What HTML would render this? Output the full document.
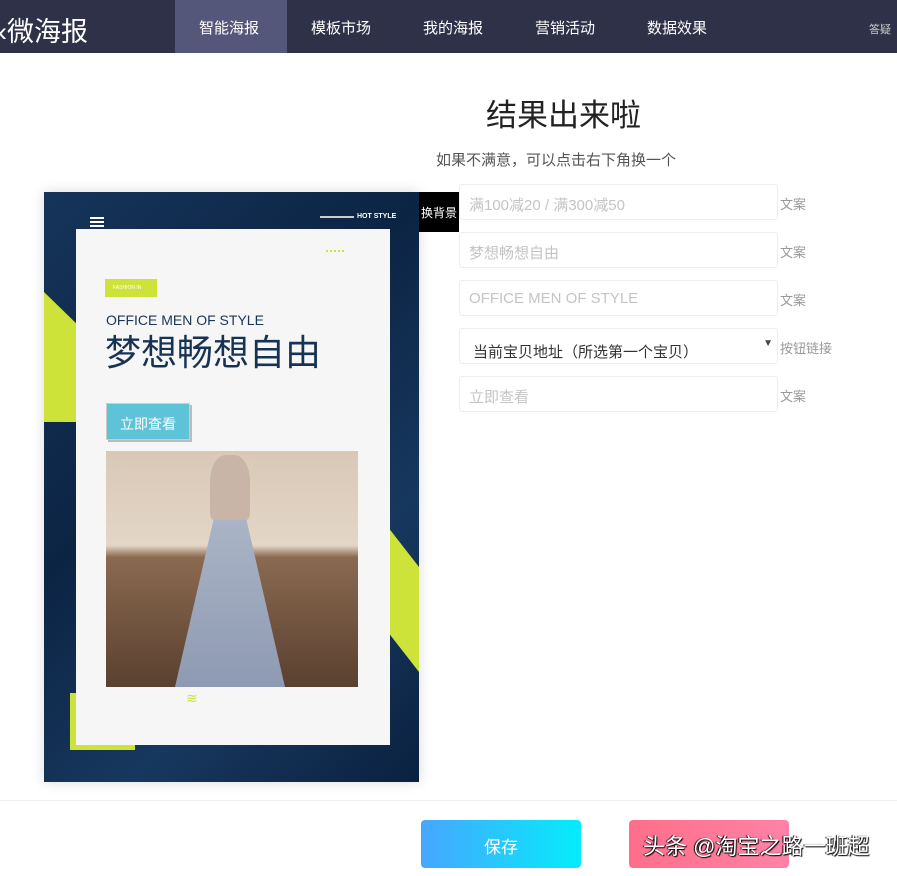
<!DOCTYPE html><html><head><meta charset="utf-8"><style>
*{margin:0;padding:0;box-sizing:border-box}
body{width:897px;height:876px;background:#fff;font-family:"Liberation Sans","Noto Sans CJK SC",sans-serif;position:relative;overflow:hidden}
.nav{position:absolute;left:0;top:0;width:897px;height:53px;background:#2f3148}
.nav span{position:absolute;top:17px;color:#fff;font-size:15px}
.a{position:absolute}
.inp{position:absolute;left:459px;width:319px;height:36px;border:1px solid #eee;border-radius:3px;color:#c4c4c4;font-size:15px;padding:9px 0 0 9px}
.lb{position:absolute;left:780px;color:#999;font-size:13px}
</style></head><body>
<div class="nav">
<span style="left:-2px;top:10px;font-size:27px">‹微海报</span>
<div class="a" style="left:175px;top:0;width:112px;height:53px;background:#55577a"></div>
<span style="left:199px">智能海报</span><span style="left:311px">模板市场</span><span style="left:423px">我的海报</span><span style="left:535px">营销活动</span><span style="left:647px">数据效果</span>
<span style="left:869px;top:21px;font-size:11px;color:#ccc">答疑</span>
</div>
<div class="a" style="left:486px;top:90px;font-size:31px;color:#222">结果出来啦</div>
<div class="a" style="left:436px;top:149px;font-size:15px;color:#555">如果不满意，可以点击右下角换一个</div>
<div class="inp" style="top:184px">满100减20 / 满300减50</div><div class="lb" style="top:194px">文案</div>
<div class="inp" style="top:232px">梦想畅想自由</div><div class="lb" style="top:242px">文案</div>
<div class="inp" style="top:280px">OFFICE MEN OF STYLE</div><div class="lb" style="top:290px">文案</div>
<div class="inp" style="top:328px;color:#333;padding-left:13px;padding-top:12px">当前宝贝地址（所选第一个宝贝）<span style="position:absolute;right:4px;top:9px;font-size:10px;color:#444">▼</span></div><div class="lb" style="top:338px">按钮链接</div>
<div class="inp" style="top:376px">立即查看</div><div class="lb" style="top:386px">文案</div>
<!-- poster -->
<div class="a" style="left:44px;top:192px;width:375px;height:590px;background:linear-gradient(135deg,#16345a,#0c2444 40%,#17385e 70%,#0b2140);box-shadow:0 0 12px rgba(0,0,0,.15);overflow:hidden">
<div class="a" style="left:0;top:100px;width:40px;height:130px;background:#cde33a;clip-path:polygon(0 0,100% 30%,100% 100%,0 100%)"></div>
<div class="a" style="left:340px;top:330px;width:35px;height:150px;background:#cde33a;clip-path:polygon(0 0,100% 30%,100% 100%,0 70%)"></div>
<div class="a" style="left:26px;top:501px;width:65px;height:57px;background:#cde33a"></div>
<div class="a" style="left:46px;top:25px;width:14px;height:2px;background:#fff;box-shadow:0 4px #fff,0 8px #fff"></div>
<div class="a" style="left:276px;top:24px;width:34px;height:2px;background:#ccc"></div>
<div class="a" style="left:313px;top:21px;font-size:7px;color:#fff;font-weight:bold">HOT STYLE</div>
</div>
<div class="a" style="left:419px;top:192px;width:40px;height:40px;background:#000;color:#fff;font-size:12px;padding-top:12px;text-align:center">换背景</div>
<div class="a" style="left:76px;top:229px;width:314px;height:516px;background:#f6f6f6"></div>
<div class="a" style="left:326px;top:250px;width:18px;height:4px;border-top:2px dotted #cde33a"></div>
<div class="a" style="left:105px;top:279px;width:52px;height:18px;background:#cde33a;color:#fff;font-size:5px;padding:6px 0 0 8px">FASHION IN</div>
<div class="a" style="left:106px;top:312px;font-size:14px;color:#1b3556">OFFICE MEN OF STYLE</div>
<div class="a" style="left:105px;top:331px;font-size:36px;color:#173354;line-height:44px">梦想畅想自由</div>
<div class="a" style="left:106px;top:403px;width:84px;height:37px;background:#5fc3d8;border:1px solid #ccc;box-shadow:2px 2px 0 #bbb;color:#fff;font-size:14px;text-align:center;padding-top:10px">立即查看</div>
<div class="a" style="left:106px;top:451px;width:252px;height:236px;background:linear-gradient(180deg,#d9c8b6 0%,#e3d6c6 40%,#8a6a50 45%,#5a4030 100%)"></div>
<div class="a" style="left:175px;top:520px;width:110px;height:167px;background:linear-gradient(180deg,#aab4c6,#8e9ab3);clip-path:polygon(35% 0,65% 0,100% 100%,0 100%)"></div>
<div class="a" style="left:210px;top:455px;width:40px;height:65px;background:#c9b4a8;border-radius:40% 40% 10% 10%"></div>
<div class="a" style="left:186px;top:690px;font-size:14px;color:#cde33a">≋</div>
<!-- bottom -->
<div class="a" style="left:0;top:800px;width:897px;height:1px;background:#eee"></div>
<div class="a" style="left:421px;top:820px;width:160px;height:48px;border-radius:4px;background:linear-gradient(90deg,#47a6ff,#05ecfb);color:#fff;font-size:17px;text-align:center;padding-top:13px">保存</div>
<div class="a" style="left:629px;top:820px;width:160px;height:48px;border-radius:4px;background:linear-gradient(90deg,#ff6e8a,#ff82a6)"></div>
<div class="a" style="left:643px;top:829px;font-size:22px;color:#fff;text-shadow:1px 1px 1px #000,-1px 0 1px #000">头条 @淘宝之路一班超</div>
</body></html>
